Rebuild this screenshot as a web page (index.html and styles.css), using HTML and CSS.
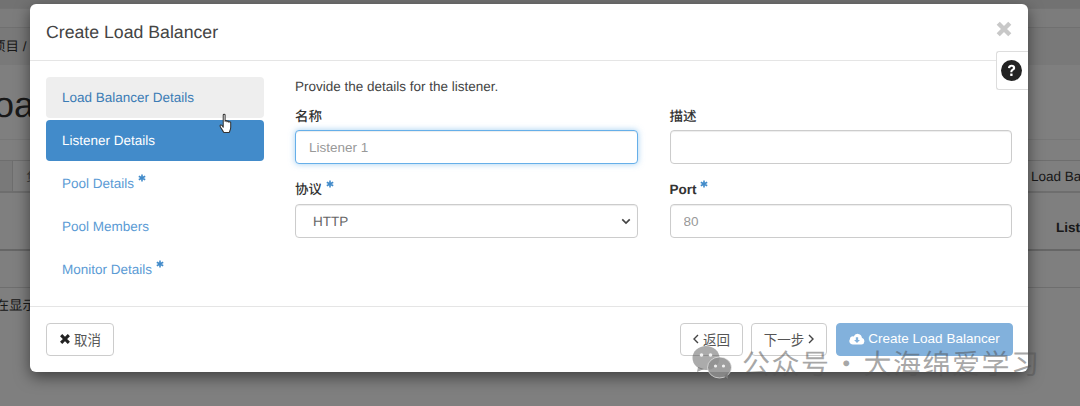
FILE: index.html
```html
<!DOCTYPE html>
<html lang="zh">
<head>
<meta charset="utf-8">
<title>Create Load Balancer</title>
<link rel="stylesheet" href="styles.css">
</head>
<body>
<div class="page">
  <div class="topbar"></div>
  <div class="subbar"></div>
  <div class="crumbs"><span class="crumb-text">项目 /</span></div>
  <h1 class="page-title">Load Balancers</h1>
  <div class="toolbar"></div>
  <div class="thead">
    <span class="th-cell"></span>
    <span class="th-cell th-char">负</span>
    <span class="th-right">Load Balancers</span>
  </div>
  <div class="trow"><span class="trow-bold">Listeners</span></div>
  <div class="tempty"></div>
  <div class="tfoot">正在显示 1 项</div>
</div>
<div class="backdrop"></div>

<section class="modal">
  <header class="modal-header">
    <h2 class="modal-title">Create Load Balancer</h2>
    <svg class="close-icon" viewBox="0 0 14 14"><path d="M2.500 2.500l9 9M11.500 2.500l-9 9"/></svg>
  </header>
  <div class="help-tab">
    <svg class="help-icon" viewBox="0 0 20 20">
      <circle cx="10" cy="10" r="10" fill="#222"/>
      <path d="M6.600 7.600C6.800 5.600 8.200 4.500 10.100 4.500c2 0 3.400 1.200 3.400 2.900 0 1.300-.7 2-1.700 2.700-.7.500-1 .8-1 1.600H8.900c0-1.400.4-2.100 1.300-2.800.8-.6 1.100-.9 1.100-1.500 0-.6-.5-1-1.200-1-.8 0-1.300.5-1.400 1.400z" fill="#fff"/>
      <rect x="8.800" y="12.900" width="2.200" height="2.300" fill="#fff"/>
    </svg>
  </div>
  <div class="modal-body">
    <nav class="steps">
      <a class="step step-hover">Load Balancer Details</a>
      <a class="step step-active">Listener Details</a>
      <a class="step">Pool Details <svg class="req" viewBox="0 0 10 10"><path d="M5 .5v9M1 2.750l8 4.500M9 2.750l-8 4.500"/></svg></a>
      <a class="step">Pool Members</a>
      <a class="step">Monitor Details <svg class="req" viewBox="0 0 10 10"><path d="M5 .5v9M1 2.750l8 4.500M9 2.750l-8 4.500"/></svg></a>
    </nav>
    <div class="form">
      <p class="intro">Provide the details for the listener.</p>
      <div class="fields">
        <div class="field">
          <label class="label label-cjk">名称</label>
          <input class="control control-focus" placeholder="Listener 1">
        </div>
        <div class="field">
          <label class="label label-cjk">描述</label>
          <input class="control">
        </div>
        <div class="field">
          <label class="label label-cjk label-tall">协议 <svg class="req" viewBox="0 0 10 10"><path d="M5 .5v9M1 2.750l8 4.500M9 2.750l-8 4.500"/></svg></label>
          <div class="select-box">
            <span>HTTP</span>
            <svg class="select-arrow" viewBox="0 0 12 8"><path d="M1.500 1.500L6 6l4.500-4.500"/></svg>
          </div>
        </div>
        <div class="field">
          <label class="label label-tall">Port <svg class="req" viewBox="0 0 10 10"><path d="M5 .5v9M1 2.750l8 4.500M9 2.750l-8 4.500"/></svg></label>
          <input class="control" placeholder="80">
        </div>
      </div>
    </div>
  </div>
  <footer class="modal-footer">
    <button class="btn btn-cancel"><svg class="btn-x" viewBox="0 0 14 14"><path d="M2.500 2.500l9 9M11.500 2.500l-9 9"/></svg>取消</button>
    <div class="footer-right">
      <button class="btn btn-back"><svg class="angle angle-left" viewBox="0 0 6 10"><path d="M5 1L1 5l4 4"/></svg>返回</button>
      <button class="btn btn-next">下一步<svg class="angle angle-right" viewBox="0 0 6 10"><path d="M1 1l4 4-4 4"/></svg></button>
      <button class="btn btn-primary"><svg class="cloud" viewBox="0 0 18 13"><path d="M14.500 5.200A4.800 4.800 0 0 0 5.300 3.600 3.300 3.300 0 0 0 1 6.800 3.900 3.900 0 0 0 4.200 12.800H14a3.900 3.900 0 0 0 .5-7.600z" fill="#fff"/><path d="M7.700 4.500h2.600v3h2L9 11 5.700 7.500h2z" fill="#82b1dc"/></svg>Create Load Balancer</button>
    </div>
  </footer>
</section>

<svg class="hand" viewBox="0 0 16 22">
  <path d="M4.500 1.500c0-1.300 2-1.300 2 0v6.500c0-1 2-1 2 0v.5c0-1 2-1 2 0v.7c.2-.9 2-.8 2 .3v5c0 2.500-1.300 4.500-1.500 5.500H5c-.5-1.500-3.300-5-3.800-6.500-.4-1.300 1-2 2-1l1.300 2z" fill="#fff" stroke="#333" stroke-width="1.100" stroke-linejoin="round"/>
</svg>

<div class="watermark">
  <svg class="wechat" viewBox="0 0 40 33">
    <ellipse cx="14" cy="12" rx="13.500" ry="12" fill="rgba(80,80,80,.48)"/>
    <path d="M6 21l-1 5 7-3z" fill="rgba(80,80,80,.48)"/>
    <circle cx="9.500" cy="9" r="1.800" fill="#fff" fill-opacity=".85"/>
    <circle cx="18.500" cy="9" r="1.800" fill="#fff" fill-opacity=".85"/>
    <ellipse cx="27.500" cy="21.500" rx="12" ry="10.500" fill="#8e8e8e" fill-opacity=".85" stroke="#fff" stroke-opacity=".55" stroke-width="1"/>
    <path d="M32 30l4 3-.5-6z" fill="#7a7a7a"/>
    <circle cx="23.500" cy="20" r="1.600" fill="#fff" fill-opacity=".85"/>
    <circle cx="31.500" cy="20" r="1.600" fill="#fff" fill-opacity=".85"/>
  </svg>
  <span class="wm-text">公众号 · 大海绵爱学习</span>
</div>
</body>
</html>
```
FILE: styles.css
```css
* { box-sizing: border-box; }
html, body { margin: 0; padding: 0; }
body {
  width: 1080px;
  height: 406px;
  overflow: hidden;
  position: relative;
  background: #fff;
  font-family: "Liberation Sans", "Noto Sans CJK SC", sans-serif;
  font-size: 13.500px;
  color: #333;
  text-rendering: geometricPrecision;
}
.page { width: 1080px; overflow: hidden; }
.topbar { height: 9px; background: #e4e4e4; border-bottom: 1px solid #e8e8e8; }
.subbar { height: 19px; background: #f8f8f8; border-bottom: 1px solid #e0e0e0; }
.crumbs {
  height: 37px;
  background: #f2f2f2;
  line-height: 38px;
  white-space: nowrap;
  overflow: hidden;
}
.crumb-text { display: block; margin-left: -8px; }
.page-title {
  margin: 0 0 0 -26px;
  height: 75px;
  font-size: 36px;
  font-weight: 400;
  line-height: 80px;
  white-space: nowrap;
  color: #333;
  border-bottom: 1px solid #eee;
  width: 1200px;
}
.toolbar { height: 20px; }
.thead {
  height: 33px;
  display: flex;
  align-items: center;
  background: #fff;
  border-top: 1px solid #ddd;
  border-bottom: 2px solid #ddd;
  white-space: nowrap;
  overflow: hidden;
}
.th-cell { height: 100%; width: 13px; background: #f2f2f2; border-right: 1px solid #ddd; flex: none; }
.th-char { width: auto; flex: 1; background: none; border: 0; line-height: 31px; padding-left: 13px; color: #777; }
.th-right { flex: none; width: 49px; overflow: hidden; line-height: 31px; }
.trow {
  height: 58px;
  border-bottom: 2px solid #ccc;
  line-height: 70px;
  font-weight: 700;
  white-space: nowrap;
  overflow: hidden;
  display: flex;
  padding-left: 1056px;
}
.trow-bold { flex: none; }
.tempty { height: 37px; border-bottom: 1px solid #ddd; }
.tfoot { margin-left: -18px; line-height: 36px; white-space: nowrap; }

.backdrop { position: absolute; inset: 0; background: rgba(0, 0, 0, .5); }

.modal {
  position: absolute;
  left: 30px;
  top: 4px;
  width: 998px;
  height: 368px;
  background: #fff;
  border-radius: 6px;
  box-shadow: 0 5px 15px rgba(0, 0, 0, .5);
  display: flex;
  flex-direction: column;
}
.modal-header {
  height: 57px;
  flex: none;
  padding: 0 16px;
  display: flex;
  align-items: center;
  justify-content: space-between;
  border-bottom: 1px solid #e5e5e5;
}
.modal-title { margin: 0; font-size: 17.700px; font-weight: 400; line-height: 20px; color: #444; }
.close-icon { width: 18px; height: 18px; margin: 0 -1px 7px 0; fill: none; stroke: #c8c8c8; stroke-width: 3.400; }
.help-tab {
  position: absolute;
  right: 0;
  top: 47px;
  width: 32px;
  height: 39px;
  background: #fff;
  border: 1px solid #ddd;
  border-right: 0;
  border-radius: 3px 0 0 3px;
  display: flex;
  align-items: center;
  justify-content: center;
  padding-right: 2px;
}
.help-icon { width: 21px; height: 21px; }
.modal-body { flex: 1; display: flex; padding: 16px 16px 0; gap: 31px; min-height: 0; }
.steps { width: 218px; flex: none; display: flex; flex-direction: column; gap: 2px; }
.step {
  height: 41px;
  padding: 0 16px;
  line-height: 42px;
  color: #5b9bd5;
  border-radius: 4px;
  white-space: nowrap;
}
.step-hover { background: #eee; color: #3b7cb5; }
.step-active { background: #428bca; color: #fff; }
.req { width: 8px; height: 8px; fill: none; stroke: #428bca; stroke-width: 2; vertical-align: 6px; }
.form { flex: 1; min-width: 0; }
.intro { margin: 0; line-height: 20px; height: 29px; color: #444; }
.fields { display: grid; grid-template-columns: 1fr 1fr; column-gap: 32px; row-gap: 15px; }
.field { display: flex; flex-direction: column; }
.label { font-weight: 700; line-height: 22px; height: 24px; color: #333; }
.label-cjk { font-weight: 500; }
.label-tall { height: 25px; }
.control {
  height: 34px;
  width: 100%;
  padding: 6px 13px;
  border: 1px solid #ccc;
  border-radius: 4px;
  font: inherit;
  color: #555;
  background: #fff;
  outline: 0;
  box-shadow: inset 0 1px 1px rgba(0, 0, 0, .075);
}
.control::placeholder { color: #999; opacity: 1; }
.control-focus { border-color: #66afe9; box-shadow: inset 0 1px 1px rgba(0, 0, 0, .075), 0 0 6px rgba(102, 175, 233, .6); }
.select-box {
  height: 34px;
  padding: 0 12px 0 17px;
  border: 1px solid #ccc;
  border-radius: 4px;
  display: flex;
  align-items: center;
  justify-content: space-between;
  color: #666;
  box-shadow: inset 0 1px 1px rgba(0, 0, 0, .075);
}
.select-arrow { width: 10px; height: 7px; margin-right: -6px; fill: none; stroke: #444; stroke-width: 2; }
.modal-footer {
  height: 66px;
  flex: none;
  padding: 16px 15px 16px 16px;
  border-top: 1px solid #e5e5e5;
  display: flex;
  justify-content: space-between;
  align-items: flex-start;
}
.footer-right { display: flex; gap: 8px; }
.btn {
  height: 33px;
  padding: 0 0 2px;
  border: 1px solid #ccc;
  border-radius: 4px;
  background: #fff;
  color: #555;
  font: inherit;
  display: inline-flex;
  align-items: center;
  justify-content: center;
  white-space: nowrap;
}
.btn-cancel { width: 68px; }
.btn-x { width: 12px; height: 12px; margin-right: 3px; fill: none; stroke: #222; stroke-width: 3.600; }
.btn-back { width: 63px; }
.btn-next { width: 76px; }
.angle { width: 6px; height: 10px; fill: none; stroke: #444; stroke-width: 1.400; }
.angle-left { margin-right: 4px; }
.angle-right { margin-left: 4px; }
.btn-primary { width: 177px; background: #82b1dc; border-color: #82b1dc; color: #fff; margin-left: 1px; }
.cloud { width: 16px; height: 12px; margin-right: 3px; }
.hand { position: absolute; left: 219px; top: 113px; width: 15px; height: 22px; }
.watermark {
  position: absolute;
  left: 692px;
  top: 345px;
  display: flex;
  align-items: center;
  gap: 10px;
  white-space: nowrap;
}
.wechat { width: 40px; height: 33px; }
.wm-text {
  font-family: "Noto Sans CJK SC", sans-serif;
  font-size: 28px;
  line-height: 32px;
  letter-spacing: 1.500px;
  word-spacing: -6px;
  color: rgba(80, 80, 80, .5);
  margin-top: 2px;
}
```
